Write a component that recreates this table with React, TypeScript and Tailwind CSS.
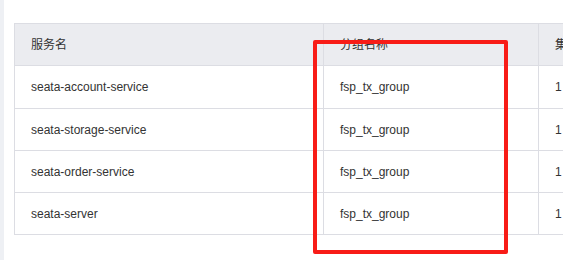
import React from 'react';

// Service list table with a highlight box drawn over the group column
const ROWS = [
  { name: 'seata-account-service', group: 'fsp_tx_group', cluster: '1' },
  { name: 'seata-storage-service', group: 'fsp_tx_group', cluster: '1' },
  { name: 'seata-order-service', group: 'fsp_tx_group', cluster: '1' },
  { name: 'seata-server', group: 'fsp_tx_group', cluster: '1' },
];

const FONT = { fontFamily: '"Liberation Sans", "Noto Sans CJK SC", sans-serif' };

export default function App() {
  return (
    <div className="relative flex w-[563px] h-[260px] overflow-hidden bg-white text-[12px] text-[#333]" style={FONT}>
      {/* side strip */}
      <div className="w-[4px] h-full bg-[#eef0f4] shrink-0" />

      <div className="flex-1 pl-[10px] pt-[23px] overflow-hidden">
        <div className="grid grid-cols-[309px_215px_220px] w-max border-t border-l border-[#dcdde3]">
          {/* header */}
          <div className="h-[42px] flex items-center pl-[16px] bg-[#ebecf0] border-b border-r border-[#dcdde3]">服务名</div>
          <div className="h-[42px] flex items-center pl-[16px] bg-[#ebecf0] border-b border-r border-[#dcdde3]">分组名称</div>
          <div className="h-[42px] flex items-center pl-[16px] bg-[#ebecf0] border-b border-r border-[#dcdde3]">集群</div>

          {ROWS.map((r, i) => (
            <React.Fragment key={r.name}>
              <div className={`${i === 0 ? 'h-[43px]' : 'h-[42px]'} flex items-center pl-[16px] border-b border-r border-[#dcdde3]`}>{r.name}</div>
              <div className={`${i === 0 ? 'h-[43px]' : 'h-[42px]'} flex items-center pl-[16px] border-b border-r border-[#dcdde3]`}>{r.group}</div>
              <div className={`${i === 0 ? 'h-[43px]' : 'h-[42px]'} flex items-center pl-[16px] border-b border-r border-[#dcdde3]`}>{r.cluster}</div>
            </React.Fragment>
          ))}
        </div>
      </div>

      {/* red annotation box */}
      <div className="absolute left-[313px] top-[40px] w-[195px] h-[214px] border-4 border-[#f81c17] rounded-[2px]" />
    </div>
  );
}
